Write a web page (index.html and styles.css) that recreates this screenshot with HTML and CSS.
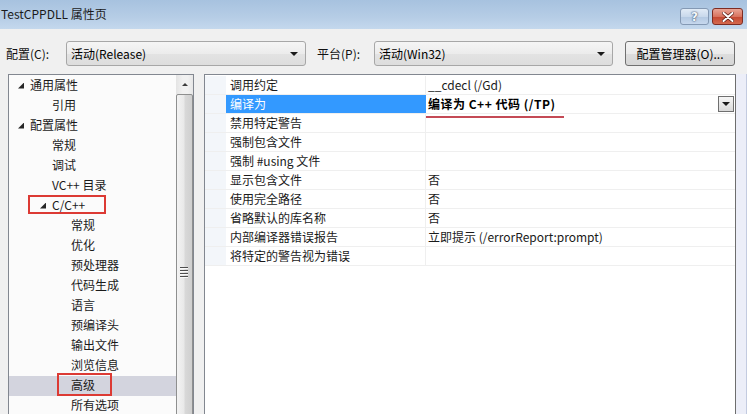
FILE: index.html
```html
<!DOCTYPE html>
<html>
<head>
  <meta charset="utf-8">
  <link rel="stylesheet" href="styles.css">
</head>
<body>
  <div class="titlebar">
    <span class="title">TestCPPDLL 属性页</span>
    <div class="caption">
      <div class="cap cap-help">?</div>
      <div class="cap cap-close">
        <svg width="12" height="10" viewBox="0 0 12 10">
          <path d="M1.5 1 L10.5 9 M10.5 1 L1.5 9" stroke="#5a1a12" stroke-width="3.4" stroke-linecap="round"/>
          <path d="M1.5 1 L10.5 9 M10.5 1 L1.5 9" stroke="#fff" stroke-width="2" stroke-linecap="round"/>
        </svg>
      </div>
    </div>
  </div>

  <div class="dialog">
    <div class="toolbar">
      <span class="tb-label">配置(C):</span>
      <div class="combo combo-config">活动(Release)<span class="combo-arrow"></span></div>
      <span class="tb-label tb-label-platform">平台(P):</span>
      <div class="combo combo-platform">活动(Win32)<span class="combo-arrow"></span></div>
      <div class="push-btn">配置管理器(O)...</div>
    </div>

    <div class="main">
      <div class="tree">
        <ul class="tree-list">
          <li class="node lv1"><span class="twisty"></span>通用属性</li>
          <li class="node lv2">引用</li>
          <li class="node lv1"><span class="twisty"></span>配置属性</li>
          <li class="node lv2">常规</li>
          <li class="node lv2">调试</li>
          <li class="node lv2">VC++ 目录</li>
          <li class="node lv2 has-twisty"><span class="twisty"></span>C/C++<span class="mark mark-cpp"></span></li>
          <li class="node lv3">常规</li>
          <li class="node lv3">优化</li>
          <li class="node lv3">预处理器</li>
          <li class="node lv3">代码生成</li>
          <li class="node lv3">语言</li>
          <li class="node lv3">预编译头</li>
          <li class="node lv3">输出文件</li>
          <li class="node lv3">浏览信息</li>
          <li class="node lv3 selected">高级<span class="mark mark-adv"></span></li>
          <li class="node lv3">所有选项</li>
        </ul>
        <div class="vscroll">
          <div class="vscroll-up"><span class="up-arrow"></span></div>
          <div class="vscroll-thumb">
            <div class="gripper"><i></i><i></i><i></i><i></i></div>
          </div>
        </div>
      </div>

      <div class="grid">
        <div class="prop-row"><span class="gutter"></span><span class="name">调用约定</span><span class="value">__cdecl (/Gd)</span></div>
        <div class="prop-row active"><span class="gutter"></span><span class="name">编译为</span><span class="value">编译为 C++ 代码 (/TP)<span class="underline"></span><span class="drop-btn"><span class="combo-arrow"></span></span></span></div>
        <div class="prop-row"><span class="gutter"></span><span class="name">禁用特定警告</span><span class="value"></span></div>
        <div class="prop-row"><span class="gutter"></span><span class="name">强制包含文件</span><span class="value"></span></div>
        <div class="prop-row"><span class="gutter"></span><span class="name">强制 #using 文件</span><span class="value"></span></div>
        <div class="prop-row"><span class="gutter"></span><span class="name">显示包含文件</span><span class="value">否</span></div>
        <div class="prop-row"><span class="gutter"></span><span class="name">使用完全路径</span><span class="value">否</span></div>
        <div class="prop-row"><span class="gutter"></span><span class="name">省略默认的库名称</span><span class="value">否</span></div>
        <div class="prop-row"><span class="gutter"></span><span class="name">内部编译器错误报告</span><span class="value">立即提示 (/errorReport:prompt)</span></div>
        <div class="prop-row"><span class="gutter"></span><span class="name">将特定的警告视为错误</span><span class="value"></span></div>
      </div>
      <div class="edge"></div>
    </div>
  </div>
</body>
</html>
```

FILE: styles.css
```css
* {
  box-sizing: border-box;
}

html, body {
  margin: 0;
}

body {
  width: 747px;
  height: 414px;
  overflow: hidden;
  background: #f0f0f0;
  color: #000;
  font-family: "Noto Sans CJK SC", "Microsoft YaHei", sans-serif;
  font-size: 12px;
}

/* Window caption */
.titlebar {
  height: 29px;
  display: flex;
  justify-content: space-between;
  align-items: flex-start;
  background: linear-gradient(180deg, #a7c2df 0%, #b6cde6 60%, #c4d8ed 100%);
}

.title {
  padding: 5px 0 0 1px;
  line-height: 18px;
  color: #1b1b1b;
}

.caption {
  display: flex;
  gap: 3px;
  margin: 8px 4px 0 0;
}

.cap {
  height: 17px;
  display: flex;
  align-items: center;
  justify-content: center;
  border-radius: 3px;
}

.cap-help {
  width: 29px;
  border: 1px solid #8499b4;
  background: linear-gradient(180deg, #e1ebf6 0%, #c9d9ec 50%, #b3c8e1 51%, #c6d8ee 100%);
  color: #f4f8fc;
  font-family: "DejaVu Sans", sans-serif;
  font-weight: bold;
  font-size: 12px;
  text-shadow: 0 0 2px #3b4f6c, 0 0 1px #3b4f6c;
}

.cap-close {
  width: 31px;
  border: 1px solid #7e2c22;
  background: linear-gradient(180deg, #e9a596 0%, #d9735f 50%, #c4452f 51%, #d46a4f 100%);
}

/* Configuration bar */
.toolbar {
  display: flex;
  align-items: center;
  height: 25px;
  margin-top: 12px;
  padding-left: 6px;
}

.tb-label {
  width: 60px;
  color: #111;
}

.tb-label-platform {
  width: 57px;
  margin-left: 11px;
}

.combo {
  position: relative;
  height: 25px;
  padding-left: 4px;
  line-height: 23px;
  border: 1px solid #a7a7a7;
  border-radius: 3px;
  background: linear-gradient(180deg, #f5f5f5 0%, #ececec 50%, #e3e3e3 51%, #dddddd 100%);
}

.combo-config {
  width: 240px;
}

.combo-platform {
  width: 239px;
}

.combo .combo-arrow {
  position: absolute;
  right: 7px;
  top: 10px;
}

.combo-arrow {
  display: block;
  width: 0;
  height: 0;
  border-left: 4px solid transparent;
  border-right: 4px solid transparent;
  border-top: 4px solid #1a1a1a;
}

.push-btn {
  width: 110px;
  height: 25px;
  margin-left: 12px;
  line-height: 23px;
  text-align: center;
  border: 1px solid #707070;
  border-radius: 3px;
  background: linear-gradient(180deg, #f4f4f4 0%, #ebebeb 50%, #dddddd 51%, #d6d6d6 100%);
}

/* Tree + property grid */
.main {
  display: flex;
  margin-top: 8px;
  padding-left: 8px;
  height: 346px;
}

.tree {
  display: flex;
  width: 186px;
  border: 1px solid #828790;
  border-bottom: none;
  background: #fbfbfb;
}

.tree-list {
  flex: 1;
  margin: 0;
  padding: 1px 0 0;
  list-style: none;
}

.node {
  position: relative;
  display: flex;
  align-items: center;
  height: 20px;
  padding-bottom: 3px;
  white-space: nowrap;
  color: #1a1a1a;
}

.node.lv1 { padding-left: 9px; }
.node.lv2 { padding-left: 43px; }
.node.lv2.has-twisty { padding-left: 31px; }
.node.lv3 { padding-left: 62px; }

.twisty {
  width: 6px;
  height: 6px;
  margin-right: 6px;
  margin-top: 2px;
  background: #262626;
  clip-path: polygon(100% 0, 100% 100%, 0 100%);
}

.node.selected {
  background: #d3d4de;
}

/* red callouts drawn over the tree */
.mark {
  position: absolute;
  border: 2px solid #dc3a34;
}

.mark-cpp {
  left: 19px;
  top: -1px;
  width: 78px;
  height: 19px;
}

.mark-adv {
  left: 48px;
  top: -3px;
  width: 55px;
  height: 23px;
}

.vscroll {
  width: 17px;
  background: linear-gradient(90deg, #e4e4e4, #f1f1f1 40%, #f1f1f1 70%, #e6e6e6);
}

.vscroll-up {
  height: 18px;
  display: flex;
  align-items: center;
  justify-content: center;
}

.up-arrow {
  width: 0;
  height: 0;
  border-left: 3px solid transparent;
  border-right: 3px solid transparent;
  border-bottom: 3px solid #3c3c3c;
}

.vscroll-thumb {
  height: 340px;
  margin-top: 1px;
  border: 1px solid #8e8f8f;
  border-radius: 2px;
  background: linear-gradient(90deg, #f3f3f3 0%, #e9e9e9 45%, #d8d8d8 55%, #cfcfcf 100%);
  padding-top: 172px;
}

.gripper {
  display: flex;
  flex-direction: column;
  gap: 2px;
  padding-left: 3px;
}

.gripper i {
  display: block;
  width: 8px;
  height: 1px;
  background: #4f4f4f;
  box-shadow: 0 1px 0 #fafafa;
}

.grid {
  width: 532px;
  margin-left: 10px;
  padding-top: 1px;
  border: 1px solid #828790;
  border-right-color: #6e6e6e;
  border-bottom: none;
  background: #fff;
}

.prop-row {
  display: flex;
  height: 19px;
  line-height: 18px;
  border-bottom: 1px solid #efefef;
}

.gutter {
  width: 21px;
  background: #f3f6fa;
}

.name {
  width: 200px;
  padding-left: 4px;
  border-right: 1px solid #efefef;
  color: #1a1a1a;
  white-space: nowrap;
}

.value {
  position: relative;
  flex: 1;
  padding-left: 2px;
  color: #1a1a1a;
  white-space: nowrap;
}

.prop-row.active .name {
  background: #3399ff;
  color: #fff;
  border-right-color: #3399ff;
}

.prop-row.active .value {
  font-weight: bold;
  letter-spacing: 0.5px;
  color: #000;
}

.underline {
  position: absolute;
  left: 0;
  top: 21px;
  width: 138px;
  height: 2px;
  background: #c44a55;
}

.drop-btn {
  position: absolute;
  right: 1px;
  top: 1px;
  width: 16px;
  height: 16px;
  display: flex;
  align-items: center;
  justify-content: center;
  border: 1px solid #6f6f6f;
  background: linear-gradient(180deg, #f6f6f6, #d9d9d9);
}

.edge {
  width: 11px;
  background: #eceef8;
  border-right: 1px solid #c3cbe0;
}
```
